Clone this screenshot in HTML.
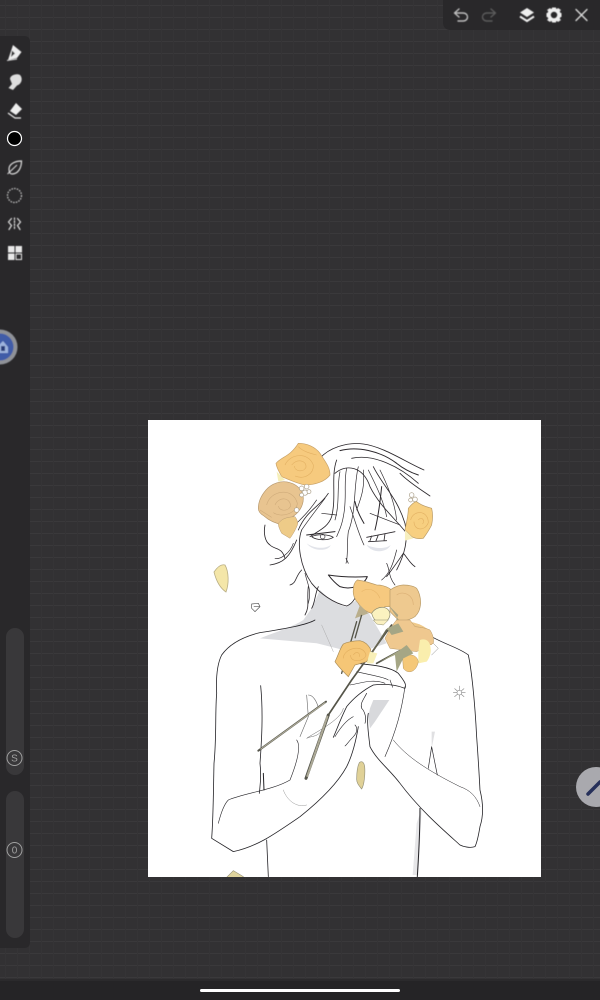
<!DOCTYPE html>
<html><head><meta charset="utf-8"><style>
html,body{margin:0;padding:0;background:#323133;width:600px;height:1000px;overflow:hidden}
svg{display:block}
</style></head><body>
<svg width="600" height="1000" viewBox="0 0 600 1000" xmlns="http://www.w3.org/2000/svg">
<defs>
<pattern id="g" width="12" height="12" patternUnits="userSpaceOnUse">
<rect width="12" height="12" fill="#323133"/>
<rect y="5" width="12" height="1" fill="#3a393b"/>
<rect x="5" width="1" height="12" fill="#353436"/>
</pattern>
<filter id="soft" x="-5%" y="-5%" width="110%" height="110%"><feGaussianBlur stdDeviation="0.3"/></filter>
<filter id="soft2" x="-20%" y="-20%" width="140%" height="140%"><feGaussianBlur stdDeviation="0.4"/></filter>
<clipPath id="art"><rect x="148" y="420" width="393" height="457"/></clipPath>
</defs>
<rect width="600" height="1000" fill="url(#g)"/>

<!-- canvas -->
<rect x="148" y="420" width="393" height="457" fill="#fff"/>

<g clip-path="url(#art)"><g filter="url(#soft)">
<!-- neck shadow -->
<g transform="translate(240,430) scale(.3333)">
<path d="M60 625C110 605 160 590 190 570L215 535L240 480C270 510 295 528 320 530L350 510L375 530L440 640L350 670L230 640Z" fill="#dcdde0"/>
</g>

<!-- zoom5 group: hair/face -->
<g transform="translate(240,430) scale(.3333)">
<g fill="none" stroke="#2c282c" stroke-width="2.500" stroke-linecap="round" stroke-linejoin="round">
<path d="M240 85C265 55 320 35 370 42C430 50 495 95 552 120"/>
<path d="M300 62C350 48 420 62 470 100C495 120 520 130 535 135" stroke-width="3"/>
<path d="M335 85C400 70 480 110 535 160"/>
<path d="M480 130C510 160 545 180 570 198"/>
<path d="M290 90C272 140 290 200 275 260C265 290 240 300 210 320"/>
<path d="M285 130C320 100 370 110 390 170C420 230 470 270 500 310"/>
<path d="M300 125C290 170 300 220 285 270" stroke-width="2"/>
<path d="M320 115C310 160 322 205 310 260C305 290 298 300 290 320" stroke-width="2"/>
<path d="M355 110C340 170 350 240 325 305C320 340 325 380 318 400" stroke-width="2"/>
<path d="M370 120C375 170 365 200 350 240" stroke-width="2"/>
<path d="M345 215C350 240 360 260 372 280" stroke-width="3"/>
<path d="M400 110C430 170 470 200 495 280C505 330 495 370 470 420"/>
<path d="M385 120C410 170 430 210 440 260" stroke-width="2"/>
<path d="M420 120C445 170 465 220 470 270" stroke-width="2"/>
<path d="M330 230C345 270 355 310 372 345" stroke-width="2"/>
<path d="M425 170C420 220 415 260 405 300" stroke-width="3"/>
<path d="M390 250L480 285" stroke-width="2"/>
<path d="M265 190C240 230 200 240 175 300"/>
<path d="M230 210C210 240 190 260 170 280" stroke-width="2"/>
<path d="M255 205C225 245 205 270 185 300" stroke-width="2"/>
<path d="M245 250L290 255" stroke-width="2"/>
<path d="M185 300C170 340 180 410 215 460C240 490 280 520 320 528C335 522 345 510 350 490"/>
<path d="M170 330C150 380 130 400 90 405"/>
<path d="M160 340C150 370 120 390 105 385" stroke-width="2"/>
<path d="M185 420C165 440 170 460 150 465M205 470C200 510 210 530 195 555M235 470C225 490 225 520 215 535"/>
<path d="M195 430C205 470 215 480 205 520" stroke-width="2"/>
<path d="M75 285C70 310 75 335 90 345C105 360 125 350 135 385"/>
<path d="M440 440C455 420 470 400 490 370C500 380 510 400 525 410"/>
<path d="M440 400C450 420 445 440 465 465" stroke-width="2"/>
<path d="M470 360C460 400 450 430 425 450" stroke-width="2"/>
<path d="M200 315L285 305" stroke-width="3"/>
<path d="M215 320C230 312 265 312 280 322C265 332 230 332 215 320Z" stroke-width="2.500"/>
<circle cx="248" cy="320" r="7" stroke-width="2"/>
<path d="M380 322L465 305M385 335L440 332M395 318L390 332M415 315L408 332M435 312L432 332" stroke-width="2.500"/>
<path d="M265 435C310 442 345 442 382 440C370 470 330 480 300 470C285 460 275 448 265 435Z" stroke-width="3"/>
<path d="M318 385L325 400" stroke-width="2"/>
<path d="M35 522L55 520L60 530L45 545L35 535ZM42 530H58" stroke="#555" stroke-width="2"/>
</g>
<path d="M200 340C225 358 260 356 272 345C266 365 218 365 200 340ZM380 345C410 358 440 356 452 345C440 370 395 370 380 345Z" fill="#c5cad6" opacity=".5"/>

<!-- Rose 1 -->
<path d="M108 100C125 80 150 80 175 40C200 40 225 50 240 70C255 95 270 110 270 135C255 155 225 165 195 165C170 160 150 150 125 140C118 125 110 115 108 100Z" fill="#f6ca7e" stroke="#c8a268" stroke-width="2"/>
<g fill="none" stroke="#e2b062" stroke-width="1.800"><path d="M135 105C150 70 205 65 220 105C222 130 195 150 165 138"/><path d="M155 105C170 85 200 90 198 112C190 128 165 125 163 108"/><path d="M175 50C190 65 210 70 230 75"/></g>
<path d="M110 125L135 150L115 155Z" fill="#f6efb8"/>
<!-- Rose 2 -->
<path d="M55 235C55 215 65 195 78 180C95 160 125 150 150 158C175 165 190 185 190 205C190 230 175 250 155 262L130 285C105 280 85 270 72 258C62 252 55 245 55 235Z" fill="#e8c490" stroke="#b89a70" stroke-width="2"/>
<g fill="none" stroke="#cfab7a" stroke-width="1.800"><path d="M80 225C90 180 160 170 172 220C170 250 125 265 100 248"/><path d="M105 225C115 200 150 200 152 228C145 245 118 245 115 228"/><path d="M60 240L95 262"/></g>
<!-- small rose -->
<path d="M115 280C125 270 130 262 165 260C172 270 175 280 172 285C165 305 150 325 150 325L125 310C120 300 115 290 115 280Z" fill="#eecb88" stroke="#b89a70" stroke-width="1.500"/>
<!-- white flowers -->
<g fill="#fff" stroke="#a89c85" stroke-width="2">
<circle cx="185" cy="175" r="7"/><circle cx="200" cy="170" r="7"/><circle cx="195" cy="188" r="8"/><circle cx="185" cy="195" r="6"/><circle cx="207" cy="185" r="6"/>
<circle cx="515" cy="195" r="7"/><circle cx="525" cy="208" r="7"/><circle cx="512" cy="210" r="6"/><circle cx="170" cy="240" r="7"/>
</g>
<!-- right rose -->
<path d="M505 235C515 222 522 215 530 215C545 228 565 232 575 235C580 255 578 270 575 285C565 305 555 318 550 325C535 328 525 325 515 320L495 300C498 280 505 260 505 235Z" fill="#f7cf80" stroke="#b89a66" stroke-width="2"/>
<g fill="none" stroke="#e2b062" stroke-width="1.800"><path d="M512 270C520 238 565 240 565 278C555 305 522 302 522 275"/><path d="M535 270C545 258 555 270 548 282"/></g>
<path d="M495 300L520 325L495 332Z" fill="#f7efbe"/>
<!-- bottom roses -->
<path d="M340 480C340 465 345 455 352 450C370 452 395 460 410 465C430 465 445 472 455 480C465 500 470 515 470 530L435 530L395 550C375 545 360 530 355 520C345 510 338 495 340 480Z" fill="#f6c97f" stroke="#b89a66" stroke-width="2"/>
<path d="M365 485C385 470 410 480 420 505" fill="none" stroke="#e6b468" stroke-width="1.800"/>
<path d="M450 480C465 470 480 465 490 465C510 465 525 470 530 475C540 490 542 505 542 520C540 540 535 550 525 560C510 570 495 573 480 575L450 545Z" fill="#eec98f" stroke="#b89a66" stroke-width="2"/>
<path d="M470 495C490 480 520 495 520 525" fill="none" stroke="#dbb076" stroke-width="1.800"/>
<path d="M395 550C410 525 450 525 450 555C445 585 405 590 395 550Z" fill="#fbf2c0" stroke="#8c8a70" stroke-width="2"/>
<path d="M445 525L475 555L460 590L435 605L465 605L480 575Z" fill="#a7a384"/>
<path d="M480 575C510 572 540 580 560 595C575 610 585 625 575 645H470Z" fill="#efc98a"/>
<path d="M360 525L385 550L345 565Z" fill="#b9ae8c"/>
<path d="M365 555L345 625" stroke="#555448" stroke-width="4" fill="none"/>
</g>

<!-- body: zoom6 coords -->
<g transform="translate(200,620) scale(.3333)">
<path d="M520 240H568L525 305L510 325L505 290L510 265Z" fill="#d8d9dc"/>
<path d="M650 610L665 565L655 765H638Z" fill="#e6e6e8"/>
<path d="M695 335L705 335L695 385Z" fill="#e0e0e2"/>
<g fill="none" stroke="#242226" stroke-width="2.400" stroke-linecap="round" stroke-linejoin="round">
<path d="M345 0C320 15 260 25 180 38C130 50 90 70 65 105C50 135 48 180 50 220C45 280 50 350 42 430C40 520 40 590 35 655L100 695C170 680 220 645 300 590C350 550 410 495 440 440C460 400 470 350 475 320"/>
<path d="M182 197C190 280 185 360 180 430C185 470 180 500 178 520"/>
<path d="M190 460L192 510" stroke-width="3"/>
<path d="M290 360C305 380 290 430 270 480C220 510 130 520 85 540C70 555 60 590 55 610" stroke-width="1.800"/>
<path d="M250 510C260 540 290 565 320 555" stroke="#999" stroke-width="1.500"/>
<path d="M200 660L205 770"/>
<path d="M695 50C740 75 780 85 805 105C815 150 825 250 830 350C835 420 838 470 840 510C850 550 850 590 840 620C835 650 830 670 825 680C810 685 790 680 780 675C730 630 660 570 600 490C570 450 530 420 510 380C505 340 500 300 505 280"/>
<path d="M660 565C660 650 655 720 652 770" stroke-width="3"/>
<path d="M695 380L685 445M695 380L712 465" stroke-width="2"/>
<path d="M580 360C620 410 680 450 780 500C810 510 830 530 840 560" stroke-width="1.500"/>
<path d="M615 200C605 270 590 330 555 410" stroke-width="1.800"/>
<path d="M470 130C520 135 570 140 595 160C615 185 620 195 615 205C590 195 560 190 520 195C490 210 460 235 440 260C420 300 410 330 400 352"/>
<path d="M470 155C510 165 550 170 565 180M450 195C480 190 520 175 555 190M570 180L578 202" stroke-width="1.800"/>
<path d="M430 265C425 300 340 340 320 355C340 345 360 355 375 310" stroke="#666" stroke-width="1.500"/>
<path d="M320 225L325 290L300 350M325 225C340 225 350 245 355 262" stroke="#666" stroke-width="1.800"/>
<path d="M460 290C440 300 420 325 405 350M465 315C475 325 470 340 460 350C445 365 440 375 435 378" stroke-width="1.800"/>
<path d="M500 220C490 240 480 250 485 265C495 275 500 295 495 310" stroke-width="2"/>
<path d="M365 15L400 95" stroke="#aaa" stroke-width="1.500"/>
<path d="M700 70L715 85L695 105" stroke="#888" stroke-width="1.500"/>
<path d="M778 198L778 238M760 218L796 218M764 206L792 230M792 206L764 230" stroke="#888" stroke-width="1.800"/>
</g>
<circle cx="778" cy="218" r="7" fill="#fff" stroke="#666" stroke-width="1.500"/>
<!-- stems -->
<g fill="none" stroke-linecap="round">
<path d="M175 392L378 245" stroke="#55554c" stroke-width="6"/>
<path d="M182 387L375 248" stroke="#b3b09c" stroke-width="3"/>
<path d="M318 475L385 285" stroke="#55554c" stroke-width="9"/>
<path d="M322 468L382 290" stroke="#aca996" stroke-width="6"/>
<path d="M385 285L455 180L575 15" stroke="#555448" stroke-width="5"/>
<path d="M425 160L470 5" stroke="#555448" stroke-width="4"/>
<path d="M505 115L560 30" stroke="#666552" stroke-width="5"/>
<path d="M530 130L640 70" stroke="#55554a" stroke-width="5"/>
</g>
<!-- rose lower-left -->
<path d="M405 125C415 105 420 85 430 72C445 65 465 62 480 62C495 65 505 75 512 88C512 105 505 118 500 125L465 135L445 170C430 155 415 140 405 125Z" fill="#f5c676" stroke="#a98c57" stroke-width="2"/>
<g fill="none" stroke="#e2ae5e" stroke-width="1.800"><path d="M430 115C430 85 490 70 498 105C495 125 450 130 452 105"/><path d="M460 105C468 92 482 98 478 110"/></g>
<path d="M510 95L532 100L520 130L500 130Z" fill="#f8efb8"/>
<!-- roses right -->
<path d="M555 55C565 35 580 10 590 0H630L645 20C665 22 680 25 690 30C700 45 702 60 700 70L650 95L610 90L570 85Z" fill="#efc88f" stroke="#b89a68" stroke-width="1.500"/>
<path d="M660 60C675 55 690 60 692 85C695 100 685 120 680 125L655 130L655 95Z" fill="#faeead"/>
<path d="M608 115C620 100 650 100 655 125C650 155 625 165 610 145Z" fill="#f5c878" stroke="#b89a66" stroke-width="1.500"/>
<path d="M540 125L600 90L620 75L640 100L610 115L590 155L585 105Z" fill="#a5a685"/>
<path d="M560 25L595 10L610 35L575 45Z" fill="#a5a685"/>
<path d="M520 0H565L550 15L530 12Z" fill="#faf0c0" stroke="#8b8b70" stroke-width="1.500"/>
<!-- petals -->
<path d="M478 428C484 422 492 425 494 440C496 460 493 495 485 507C478 498 470 490 470 478C470 460 472 440 478 428Z" fill="#e0d197" stroke="#97937a" stroke-width="2"/>
<path d="M80 772L100 752L130 770V780H80Z" fill="#dfd49d" stroke="#97937a" stroke-width="2"/>
</g>
<path d="M214 572C218 566 222 564 225 565C229 572 229 584 226 592C220 588 216 580 214 572Z" fill="#f4e6a8" stroke="#b9ae84" stroke-width=".8"/>
</g></g>

<!-- bottom bar -->
<rect y="981" width="600" height="19" fill="#252426"/>
<rect y="979" width="600" height="2" fill="#2b2a2c"/>
<rect x="200" y="989" width="200" height="3" rx="1.500" fill="#fff"/>

<!-- top right panel -->
<path d="M443 0H600V30H451Q443 30 443 22Z" fill="#29282a"/>
<g filter="url(#soft2)">
<g fill="none" stroke="#bdbdbd" stroke-width="1.400" stroke-linecap="round" stroke-linejoin="round">
<path d="M459 9L454.500 13L459 17M455 13H463C469 13 469 21 463 21H458"/>
<path d="M491 9L495.500 13L491 17M495 13H487C481 13 481 21 487 21H492" stroke="#5b5b5b"/>
</g>
<path d="M527 8L534 12.500L527 17L520 12.500Z" fill="#efefef"/>
<path d="M520 16.500L527 21L534 16.500" fill="none" stroke="#efefef" stroke-width="2"/>
<g fill="#efefef">
<circle cx="554" cy="15" r="5" fill="none" stroke="#efefef" stroke-width="3.500"/>
<path d="M552 7.500h4v2h-4zM552 20.500h4v2h-4zM546.500 13h2v4h-2zM559.500 13h2v4h-2z"/>
<path d="M547 10l3-2 2 2-3 2zM561 10l-3-2-2 2 3 2zM547 20l3 2 2-2-3-2zM561 20l-3 2-2-2 3-2z"/>
</g>
<path d="M576 9.500L587 20.500M587 9.500L576 20.500" stroke="#dedede" stroke-width="1.300" stroke-linecap="round"/>
</g>

<!-- left toolbar -->
<path d="M0 36H24Q30 36 30 42V942Q30 948 24 948H0Z" fill="#29282a"/>
<g filter="url(#soft2)">
<path d="M13 45L21.500 52L17 58L8 60Z" fill="#eee"/><path d="M12 50.500L15 53.500L11 57Z" fill="#333"/><path d="M7 60.500L17 59" stroke="#ddd" stroke-width="1"/>
<path d="M10 79C10 75 17 73 20 75C23 78 22 84 17 85.500L13 90L8.500 88L12 84Z" fill="#ddd"/>
<path d="M16 103L22 109L16 115L10 111Z" fill="#eee"/><path d="M8 113L15 118H21" fill="none" stroke="#eee" stroke-width="1.200"/>
<path d="M9 169C9 164 15 161 21.500 161C21.500 168 18 174 12 174C10 174 9 172 9 169Z" fill="none" stroke="#ddd" stroke-width="1.200"/>
<path d="M7.500 174L17 165" stroke="#ddd" stroke-width="1"/>
<circle cx="14.500" cy="195.500" r="7" fill="none" stroke="#cfcfcf" stroke-width="1.200" stroke-dasharray="1.500 1.200"/>
<g fill="none" stroke="#ddd" stroke-width="1.200" stroke-linecap="round">
<path d="M11.500 218.500L8.500 222L11.500 225.500L9 229.500M17.500 218.500L20.500 222L17.500 225.500L20 229.500"/>
<path d="M14.500 218V230" stroke-dasharray="1.500 1.500"/>
</g>
<g fill="#e8e8e8">
<rect x="8" y="246" width="6.500" height="6.500"/><rect x="15.500" y="246" width="6.500" height="6.500"/><rect x="8" y="253.500" width="6.500" height="6.500"/>
<rect x="16" y="254" width="5.500" height="5.500" fill="none" stroke="#e8e8e8"/>
</g>
</g>
<circle cx="14.500" cy="138.500" r="7" fill="#000" stroke="#fff" stroke-width="1.200"/>
<!-- avatar -->
<g filter="url(#soft2)">
<circle cx="0" cy="347" r="17.500" fill="#8f9298"/>
<circle cx="0" cy="347" r="13.500" fill="#3f5ba8"/>
<path d="M-3 347L3 341L8 347V353H-3Z" fill="#9db3dd"/>
<rect x="1" y="346" width="4" height="5" fill="#2c3e7a"/>
</g>
<!-- sliders -->
<rect x="6" y="628" width="18" height="147" rx="9" fill="#39383a"/>
<rect x="6" y="791" width="18" height="147" rx="9" fill="#39383a"/>
<circle cx="14.500" cy="758" r="7.500" fill="#39383a" stroke="#a0a0a0" stroke-width="1"/>
<text x="14.500" y="761.500" font-family="'Liberation Sans',sans-serif" font-size="10" fill="#a0a0a0" text-anchor="middle">S</text>
<circle cx="14.500" cy="850" r="7.500" fill="#39383a" stroke="#a0a0a0" stroke-width="1"/>
<text x="14.500" y="853.500" font-family="'Liberation Sans',sans-serif" font-size="10" fill="#a0a0a0" text-anchor="middle">0</text>

<!-- right floating button -->
<circle cx="596" cy="787" r="20" fill="#a9a9ae"/>
<path d="M588 794L600 782" stroke="#26305a" stroke-width="3.500" stroke-linecap="round"/>
</svg>
</body></html>
